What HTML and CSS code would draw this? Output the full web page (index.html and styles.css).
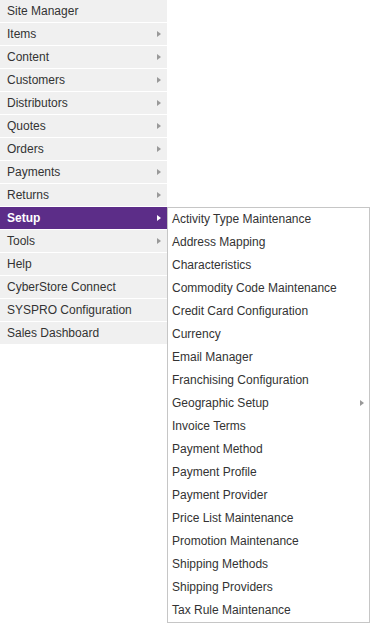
FILE: index.html
```html
<!DOCTYPE html>
<html lang="en">
<head>
  <meta charset="UTF-8">
  <title>Menu</title>
  <link rel="stylesheet" href="styles.css">
</head>
<body>
  <ul class="menu">
    <li><a href="#">Site Manager</a></li>
    <li class="has-sub"><a href="#">Items</a></li>
    <li class="has-sub"><a href="#">Content</a></li>
    <li class="has-sub"><a href="#">Customers</a></li>
    <li class="has-sub"><a href="#">Distributors</a></li>
    <li class="has-sub"><a href="#">Quotes</a></li>
    <li class="has-sub"><a href="#">Orders</a></li>
    <li class="has-sub"><a href="#">Payments</a></li>
    <li class="has-sub"><a href="#">Returns</a></li>
    <li class="has-sub active">
      <a href="#">Setup</a>
      <ul class="submenu">
        <li><a href="#">Activity Type Maintenance</a></li>
        <li><a href="#">Address Mapping</a></li>
        <li><a href="#">Characteristics</a></li>
        <li><a href="#">Commodity Code Maintenance</a></li>
        <li><a href="#">Credit Card Configuration</a></li>
        <li><a href="#">Currency</a></li>
        <li><a href="#">Email Manager</a></li>
        <li><a href="#">Franchising Configuration</a></li>
        <li class="has-sub"><a href="#">Geographic Setup</a></li>
        <li><a href="#">Invoice Terms</a></li>
        <li><a href="#">Payment Method</a></li>
        <li><a href="#">Payment Profile</a></li>
        <li><a href="#">Payment Provider</a></li>
        <li><a href="#">Price List Maintenance</a></li>
        <li><a href="#">Promotion Maintenance</a></li>
        <li><a href="#">Shipping Methods</a></li>
        <li><a href="#">Shipping Providers</a></li>
        <li><a href="#">Tax Rule Maintenance</a></li>
      </ul>
    </li>
    <li class="has-sub"><a href="#">Tools</a></li>
    <li><a href="#">Help</a></li>
    <li><a href="#">CyberStore Connect</a></li>
    <li><a href="#">SYSPRO Configuration</a></li>
    <li><a href="#">Sales Dashboard</a></li>
  </ul>
</body>
</html>
```

FILE: styles.css
```css
html, body {
  min-height: 624px;
}

body {
  margin: 0;
  font-family: "Liberation Sans", Arial, sans-serif;
  font-size: 12px;
  color: #333;
  background: #fff;
}

ul {
  list-style: none;
  margin: 0;
  padding: 0;
}

a {
  display: block;
  color: inherit;
  text-decoration: none;
}

.menu {
  width: 167px;
}

.menu > li {
  position: relative;
  background: #f0f0f0;
  border-bottom: 1px solid #fff;
}

.menu > li > a {
  height: 22px;
  line-height: 22px;
  padding-left: 7px;
}

.has-sub > a {
  position: relative;
}

/* small arrow on items with children */
.has-sub > a::after {
  content: "";
  position: absolute;
  right: 6px;
  top: 8px;
  border-left: 4px solid #999;
  border-top: 3px solid transparent;
  border-bottom: 3px solid transparent;
}

.menu > li.active {
  background: #5c2d88;
  color: #fff;
  font-weight: bold;
  z-index: 2;
}

.menu > li.active > a::after {
  border-left-color: #fff;
}

.submenu {
  position: absolute;
  left: 167px;
  top: 0;
  width: 201px;
  background: #fff;
  border: 1px solid #c6c6c6;
  color: #333;
  font-weight: normal;
  z-index: 3;
}

.submenu li a {
  height: 23px;
  line-height: 23px;
  padding-left: 4px;
}

.submenu .has-sub > a::after {
  right: 5px;
}
```
